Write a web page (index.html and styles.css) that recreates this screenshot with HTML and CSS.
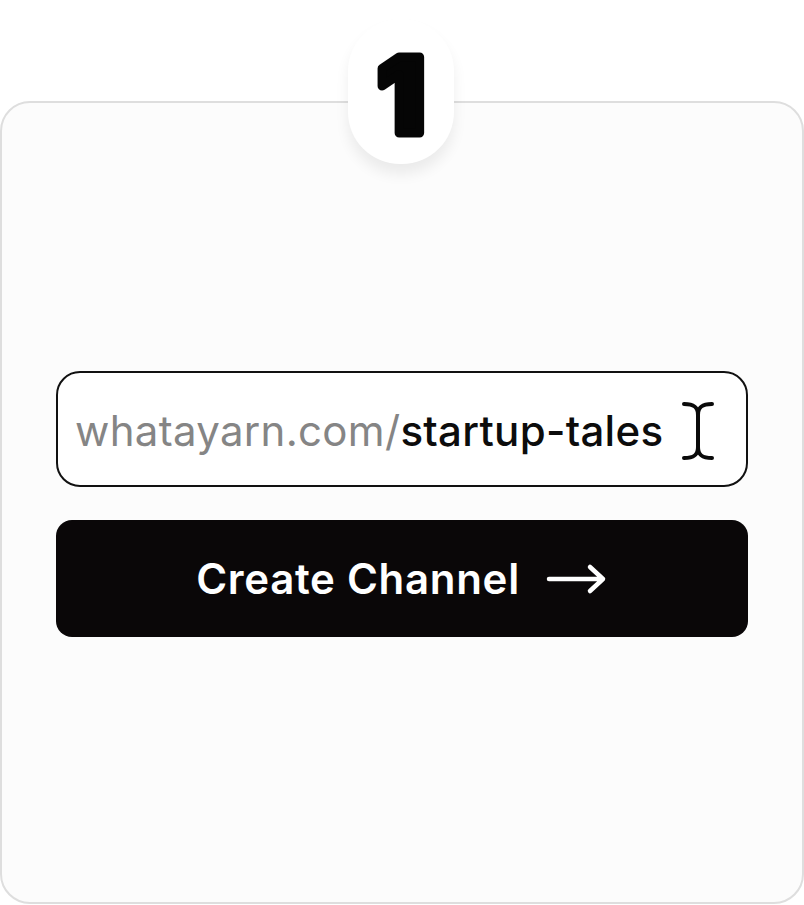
FILE: index.html
```html
<!DOCTYPE html>
<html>
<head>
<meta charset="utf-8">
<link rel="stylesheet" href="styles.css">
</head>
<body>
<div class="stage">
  <div class="card">
    <div class="form">
      <div class="field">
        <span class="url"><span class="domain">whatayarn.com/</span><span class="slug">startup-tales</span></span>
        <svg class="ibeam" width="36" height="60" viewBox="0 0 36 60">
          <path d="M4 3 C14 3 18 6 18 14 L18 46 C18 54 14 57 4 57 M32 3 C22 3 18 6 18 14 M18 46 C18 54 22 57 32 57" fill="none" stroke="#0a0a0a" stroke-width="4" stroke-linecap="round"/>
        </svg>
      </div>
      <button class="cta">
        <span>Create Channel</span>
        <svg class="arrow" width="62" height="32" viewBox="0 0 62 32">
          <path d="M3 16 H57 M44 4 L57 16 L44 28" fill="none" stroke="#fff" stroke-width="4.5" stroke-linecap="round" stroke-linejoin="round"/>
        </svg>
      </button>
    </div>
  </div>
  <div class="badge">
    <svg class="num" width="106" height="145" viewBox="0 0 106 145">
      <text x="53" y="114" text-anchor="middle">1</text>
    </svg>
  </div>
</div>
</body>
</html>
```
FILE: styles.css
```css
html, body {
  margin: 0;
  padding: 0;
  background: #ffffff;
}
.stage {
  position: relative;
  width: 804px;
  height: 905px;
  font-family: Inter, "Liberation Sans", sans-serif;
}
.card {
  position: absolute;
  left: 0;
  top: 101px;
  width: 800px;
  height: 799px;
  border: 2px solid #dedede;
  border-radius: 30px;
  background: #fcfcfc;
  display: flex;
  align-items: flex-start;
  justify-content: center;
}
.form {
  margin-top: 268px;
  width: 692px;
  display: flex;
  flex-direction: column;
  gap: 33px;
}
.field {
  box-sizing: border-box;
  height: 116px;
  border: 2px solid #111;
  border-radius: 24px;
  background: #fff;
  display: flex;
  align-items: center;
  padding: 0 30px 0 17px;
  justify-content: space-between;
}
.url {
  font-size: 42px;
  letter-spacing: 0.3px;
  color: #0c0c0c;
  margin-top: 2px;
  white-space: nowrap;
}
.domain {
  color: #858585;
}
.slug {
  font-weight: 500;
}
.ibeam {
  display: block;
  margin-top: 4px;
}
.cta {
  height: 117px;
  border: none;
  border-radius: 16px;
  background: #0a0708;
  color: #fff;
  font-family: Inter, "Liberation Sans", sans-serif;
  font-weight: 600;
  font-size: 42px;
  letter-spacing: 0.7px;
  display: flex;
  align-items: center;
  justify-content: center;
  gap: 26px;
  padding: 0;
}
.arrow {
  display: block;
}
.badge {
  position: absolute;
  left: 348px;
  top: 19px;
  width: 106px;
  height: 145px;
  border-radius: 52px;
  background: #fff;
  box-shadow: 0 10px 14px rgba(0,0,0,0.07);
}
.num {
  display: block;
  font-family: Inter, sans-serif;
  font-weight: 900;
  font-size: 104px;
  fill: #050505;
  stroke: #050505;
  stroke-width: 9px;
  stroke-linejoin: round;
}
```
